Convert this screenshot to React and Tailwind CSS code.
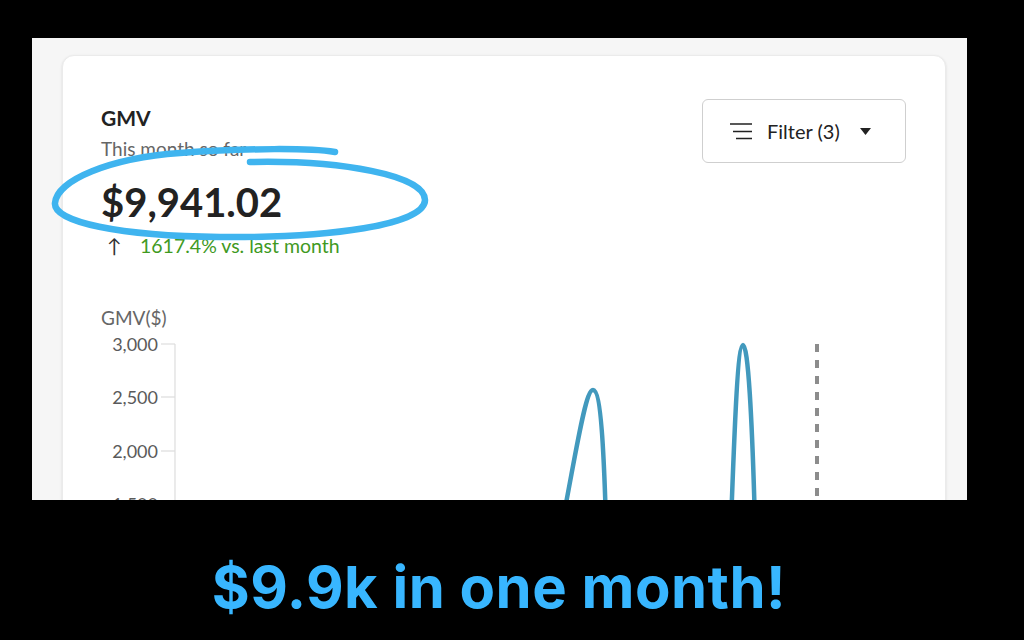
import React from "react";

const card = { fontFamily: "Lato, 'Open Sans', sans-serif" };

function FilterButton() {
  return (
    <button className="w-[204px] h-[64px] border border-[#cfcfcf] rounded-md flex items-center pl-[26px] bg-white">
      <svg width="24" height="18" viewBox="0 0 24 18" className="text-[#222]">
        <path d="M1 2h22M4 9.5h19M7 16.5h16" stroke="currentColor" strokeWidth="1.6" />
      </svg>
      <span className="ml-[14px] text-[20px] text-[#222]">Filter (3)</span>
      <svg width="11" height="7" viewBox="0 0 11 7" className="ml-[20px]">
        <path d="M0 0h11L5.5 7z" fill="#222" />
      </svg>
    </button>
  );
}

function Chart() {
  const ticks = [
    { label: "3,000", y: 10 },
    { label: "2,500", y: 63 },
    { label: "2,000", y: 117 },
    { label: "1,500", y: 170 },
  ];
  return (
    <svg width="884" height="190" viewBox="0 0 884 190" className="block">
      {ticks.map((t) => (
        <g key={t.label}>
          <text
            x="95"
            y={t.y}
            textAnchor="end"
            dominantBaseline="central"
            fontSize="18"
            fill="#5a5a5a"
            fontFamily="Lato, 'Open Sans', sans-serif"
          >
            {t.label}
          </text>
          <line x1="98" x2="112" y1={t.y} y2={t.y} stroke="#dddddd" strokeWidth="1.2" />
        </g>
      ))}
      <line x1="112" x2="112" y1="10" y2="190" stroke="#dddddd" strokeWidth="1.2" />
      {/* GMV line spikes */}
      <path
        d="M499 190 C512 125, 522 56, 530 56 C538 56, 541 120, 543 190"
        fill="none"
        stroke="#4299bd"
        strokeWidth="4.5"
        strokeLinecap="round"
      />
      <path
        d="M668 190 C672 80, 675 11, 680 11 C685 11, 689 80, 692 190"
        fill="none"
        stroke="#4299bd"
        strokeWidth="4.5"
        strokeLinecap="round"
      />
      {/* today marker */}
      <line x1="754" x2="754" y1="10" y2="190" stroke="#8c8c8c" strokeWidth="4" strokeDasharray="8 8" />
    </svg>
  );
}

export default function App() {
  return (
    <div className="w-[1024px] h-[640px] bg-black relative overflow-hidden flex flex-col">
      <div className="ml-[32px] mt-[38px] w-[935px] h-[462px] bg-[#f6f6f6] overflow-hidden pt-[17px] pl-[30px]">
        <div className="w-[884px] h-[600px] bg-white rounded-xl border border-[#ebebeb] shadow-sm" style={card}>
          <div className="flex justify-between pl-[39px] pr-[39px] pt-[43px]">
            <div className="pt-[6px] -ml-[1px]">
              <div className="text-[21px] leading-[25px] font-bold text-[#222]">GMV</div>
              <div className="mt-[7px] text-[19px] leading-[24px] text-[#666]">This month so far</div>
              <div className="mt-[18px] text-[40px] leading-[47px] font-bold text-[#222]">$9,941.02</div>
              <div className="mt-[9px] flex items-center text-[19.5px] leading-[22px]">
                <span className="w-[39px] pl-[6px] text-[#333]">↑</span>
                <span className="text-[#3f9a1f]">1617.4% vs. last month</span>
              </div>
              <div className="mt-[49px] text-[19px] leading-[24px] text-[#666]">GMV($)</div>
            </div>
            <FilterButton />
          </div>
          <div className="mt-[4px]">
            <Chart />
          </div>
        </div>
      </div>
      <div className="flex-1 flex items-center justify-center pt-[34px] pr-[26px]">
        <div
          className="text-[58px] font-bold text-[#38b6ff] tracking-[0.5px]"
          style={{ fontFamily: "Inter, sans-serif" }}
        >
          $9.9k in one month!
        </div>
      </div>
      {/* hand-drawn highlight around the total */}
      <svg width="1024" height="640" className="absolute left-0 top-0 pointer-events-none">
        <path
          d="M250 162 C340 160, 425 175, 425 200 C425 225, 330 238, 220 237 C120 236, 53 222, 55 203 C57 180, 110 158, 180 153 C250 148, 310 148, 335 152"
          fill="none"
          stroke="#3fb4ef"
          strokeWidth="6.5"
          strokeLinecap="round"
        />
      </svg>
    </div>
  );
}
